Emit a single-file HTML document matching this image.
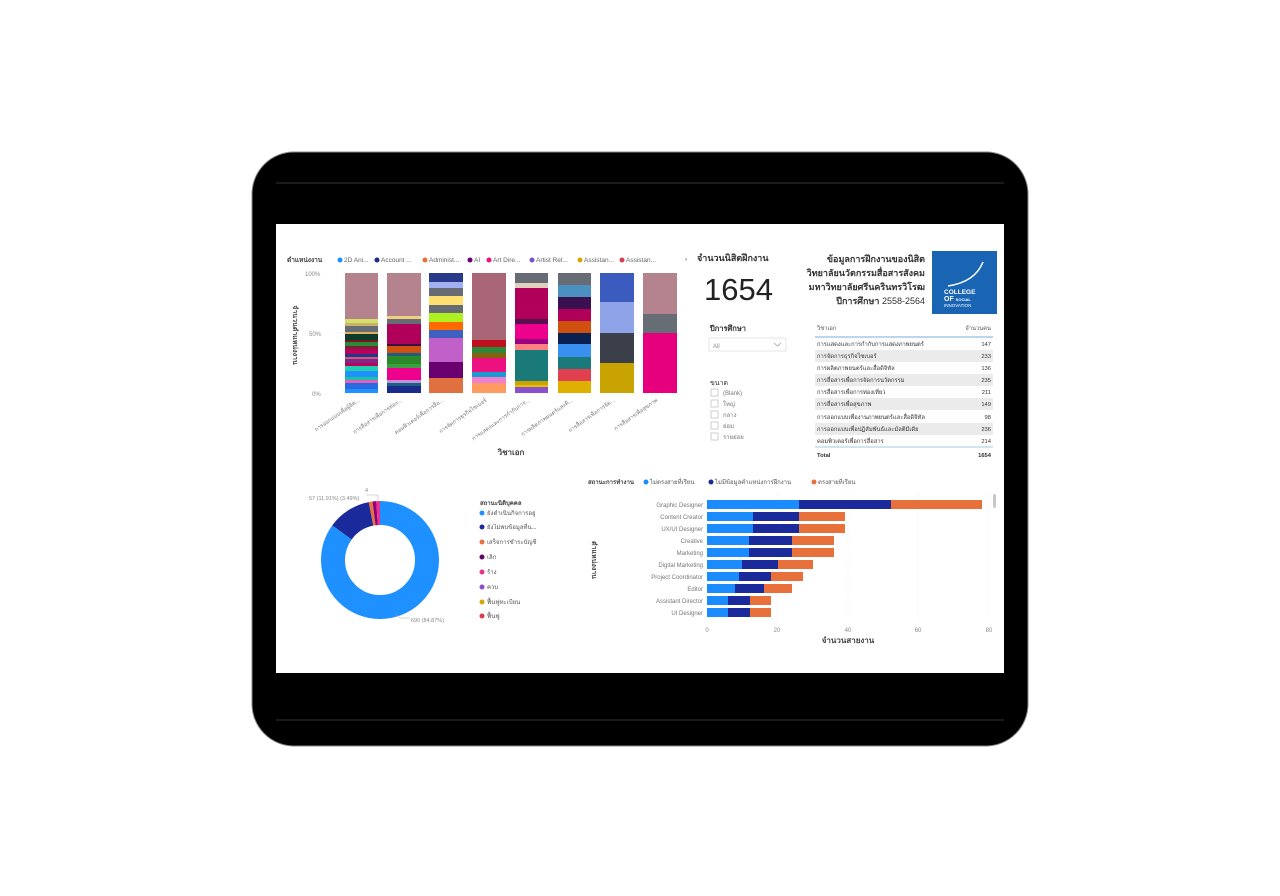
<!DOCTYPE html>
<html><head><meta charset="utf-8"><style>
html,body{margin:0;padding:0;background:#fff;width:1280px;height:896px;overflow:hidden}
svg text{font-family:"Liberation Sans","Noto Sans CJK SC",sans-serif}
</style></head><body>
<svg width="1280" height="896" viewBox="0 0 1280 896" xmlns="http://www.w3.org/2000/svg">
<rect width="1280" height="896" fill="#fff"/>
<rect x="252" y="152" width="776" height="594" rx="42" fill="#000" stroke="#888" stroke-width="1"/>
<line x1="276" y1="183" x2="1004" y2="183" stroke="#333"/>
<line x1="276" y1="720" x2="1004" y2="720" stroke="#333"/>
<rect x="276" y="224" width="728" height="449" fill="#fff"/>

<!-- legend top -->
<g font-size="6.5" fill="#666">
<text x="287" y="262" font-weight="bold" fill="#444">ตำแหน่งงาน</text>
<circle cx="340" cy="260" r="2.5" fill="#1e90ff"/><text x="344" y="262">2D Ani...</text>
<circle cx="377" cy="260" r="2.5" fill="#1a2a8a"/><text x="381" y="262">Account ...</text>
<circle cx="425" cy="260" r="2.5" fill="#e8703a"/><text x="429" y="262">Administ...</text>
<circle cx="470" cy="260" r="2.5" fill="#6a0070"/><text x="474" y="262">AI</text>
<circle cx="489" cy="260" r="2.5" fill="#ec1080"/><text x="493" y="262">Art Dire...</text>
<circle cx="532" cy="260" r="2.5" fill="#7a50d0"/><text x="536" y="262">Artist Rel...</text>
<circle cx="580" cy="260" r="2.5" fill="#d4a800"/><text x="584" y="262">Assistan...</text>
<circle cx="622" cy="260" r="2.5" fill="#d84050"/><text x="626" y="262">Assistan...</text>
</g>
<g font-size="6" fill="#888">
<text x="305" y="276">100%</text><text x="309" y="336">50%</text><text x="312" y="396">0%</text>
</g>
<line x1="330" y1="333" x2="680" y2="333" stroke="#eee" stroke-dasharray="1,2"/>
<text transform="translate(293,335) rotate(90)" font-size="7" fill="#444" text-anchor="middle" font-weight="bold">จำนวนตำแหน่งงาน</text>

<!-- bar1 -->
<g transform="translate(345,0)">
<rect y="273" width="33" height="46" fill="#b5838e"/><rect y="319" width="33" height="4" fill="#d4e06a"/><rect y="323" width="33" height="3" fill="#c9b36b"/><rect y="326" width="33" height="6" fill="#676b73"/><rect y="332" width="33" height="2" fill="#e0b060"/><rect y="334" width="33" height="6" fill="#0d3d2a"/><rect y="340" width="33" height="2" fill="#7a1420"/><rect y="342" width="33" height="4" fill="#2a8a3a"/><rect y="346" width="33" height="3" fill="#7a2030"/><rect y="349" width="33" height="5" fill="#b8005f"/><rect y="354" width="33" height="3" fill="#1b3a8a"/><rect y="357" width="33" height="2" fill="#e05070"/><rect y="359" width="33" height="4" fill="#7a2a8a"/><rect y="363" width="33" height="3" fill="#c0005a"/><rect y="366" width="33" height="5" fill="#20d0b0"/><rect y="371" width="33" height="6" fill="#1e90ff"/><rect y="377" width="33" height="3" fill="#20c0a0"/><rect y="380" width="33" height="3" fill="#e060c0"/><rect y="383" width="33" height="6" fill="#2a6adf"/><rect y="389" width="33" height="4" fill="#1e90ff"/>
</g>
<g transform="translate(387,0)">
<rect y="273" width="34" height="43" fill="#b5838e"/><rect y="316" width="34" height="3" fill="#f0d080"/><rect y="319" width="34" height="5" fill="#676b73"/><rect y="324" width="34" height="20" fill="#b0005a"/><rect y="344" width="34" height="2" fill="#3a1040"/><rect y="346" width="34" height="7" fill="#d05010"/><rect y="353" width="34" height="3" fill="#1b6080"/><rect y="356" width="34" height="8" fill="#2a8a2a"/><rect y="364" width="34" height="4" fill="#3aa040"/><rect y="368" width="34" height="12" fill="#ec008c"/><rect y="380" width="34" height="3" fill="#c090e0"/><rect y="383" width="34" height="3" fill="#1b6080"/><rect y="386" width="34" height="7" fill="#1a2a8a"/>
</g>
<g transform="translate(429,0)">
<rect y="273" width="34" height="9" fill="#2a3a8a"/><rect y="282" width="34" height="6" fill="#a0b0f0"/><rect y="288" width="34" height="8" fill="#676b73"/><rect y="296" width="34" height="9" fill="#ffe070"/><rect y="305" width="34" height="8" fill="#676b73"/><rect y="313" width="34" height="9" fill="#b0f020"/><rect y="322" width="34" height="8" fill="#ff6a00"/><rect y="330" width="34" height="8" fill="#4060c0"/><rect y="338" width="34" height="24" fill="#c060c8"/><rect y="362" width="34" height="16" fill="#6a0070"/><rect y="378" width="34" height="15" fill="#e07040"/>
</g>
<g transform="translate(472,0)">
<rect y="273" width="34" height="67" fill="#a86677"/><rect y="340" width="34" height="7" fill="#c01020"/><rect y="347" width="34" height="6" fill="#2a8a3a"/><rect y="353" width="34" height="5" fill="#8a6010"/><rect y="358" width="34" height="14" fill="#ec1080"/><rect y="372" width="34" height="5" fill="#1a9ad0"/><rect y="377" width="34" height="6" fill="#f080d0"/><rect y="383" width="34" height="10" fill="#ff9a60"/>
</g>
<g transform="translate(515,0)">
<rect y="273" width="33" height="10" fill="#676b73"/><rect y="283" width="33" height="5" fill="#e0d0c0"/><rect y="288" width="33" height="31" fill="#b0005a"/><rect y="319" width="33" height="5" fill="#5a1050"/><rect y="324" width="33" height="15" fill="#ec008c"/><rect y="339" width="33" height="5" fill="#9a0080"/><rect y="344" width="33" height="6" fill="#ff8080"/><rect y="350" width="33" height="31" fill="#1a7a7a"/><rect y="381" width="33" height="4" fill="#c9a400"/><rect y="385" width="33" height="2" fill="#e8c000"/><rect y="387" width="33" height="6" fill="#8a50d0"/>
</g>
<g transform="translate(558,0)">
<rect y="273" width="33" height="12" fill="#676b73"/><rect y="285" width="33" height="12" fill="#4a90c0"/><rect y="297" width="33" height="12" fill="#3a1050"/><rect y="309" width="33" height="12" fill="#b0005a"/><rect y="321" width="33" height="12" fill="#d05010"/><rect y="333" width="33" height="11" fill="#0a2050"/><rect y="344" width="33" height="13" fill="#3a90f0"/><rect y="357" width="33" height="12" fill="#1a7a7a"/><rect y="369" width="33" height="12" fill="#e04050"/><rect y="381" width="33" height="12" fill="#e0b000"/>
</g>
<g transform="translate(600,0)">
<rect y="273" width="34" height="29" fill="#3b5bbf"/><rect y="302" width="34" height="31" fill="#8fa3e8"/><rect y="333" width="34" height="30" fill="#3a3f4a"/><rect y="363" width="34" height="30" fill="#c9a400"/>
</g>
<g transform="translate(643,0)">
<rect y="273" width="34" height="41" fill="#b5838e"/><rect y="314" width="34" height="19" fill="#666d75"/><rect y="333" width="34" height="60" fill="#e6007e"/>
</g>
<g font-size="5.5" fill="#777">
<text transform="translate(360,401) rotate(-35)" text-anchor="end">การออกแบบเพื่อผู้ลิต...</text>
<text transform="translate(402,401) rotate(-35)" text-anchor="end">การสื่อสารเพื่อการท่อง...</text>
<text transform="translate(444,401) rotate(-35)" text-anchor="end">คอมพิวเตอร์เพื่อการสื่อ...</text>
<text transform="translate(487,401) rotate(-35)" text-anchor="end">การจัดการธุรกิจไซเบอร์</text>
<text transform="translate(530,401) rotate(-35)" text-anchor="end">การแสดงและการกำกับการ...</text>
<text transform="translate(573,401) rotate(-35)" text-anchor="end">การผลิตภาพยนตร์และดิ...</text>
<text transform="translate(615,401) rotate(-35)" text-anchor="end">การสื่อสารเพื่อการจัด...</text>
<text transform="translate(658,401) rotate(-35)" text-anchor="end">การสื่อสารเพื่อสุขภาพ</text>
</g>
<text x="511" y="455" font-size="8" fill="#444" text-anchor="middle" font-weight="bold">วิชาเอก</text>

<!-- KPI -->
<text x="685" y="261" font-size="6" fill="#444">›</text>
<text x="697" y="261" font-size="9" fill="#333" font-weight="bold">จำนวนนิสิตฝึกงาน</text>
<text x="704" y="300" font-size="31" fill="#222" font-family="DejaVu Sans">1654</text>

<!-- title -->
<g font-size="9" fill="#333" font-weight="bold" text-anchor="end">
<text x="925" y="262">ข้อมูลการฝึกงานของนิสิต</text>
<text x="925" y="276">วิทยาลัยนวัตกรรมสื่อสารสังคม</text>
<text x="925" y="290">มหาวิทยาลัยศรีนครินทรวิโรฒ</text>
<text x="925" y="304">ปีการศึกษา <tspan font-weight="normal">2558-2564</tspan></text>
</g>
<rect x="932" y="251" width="65" height="63" fill="#1a64b4"/>
<path d="M948 286 Q975 282 983 262" stroke="#fff" stroke-width="1.5" fill="none"/>
<text x="944" y="294" font-size="6.5" fill="#fff" font-weight="bold">COLLEGE</text>
<text x="944" y="301" font-size="7" fill="#fff" font-weight="bold">OF <tspan font-size="4">SOCIAL</tspan></text>
<text x="944" y="307" font-size="4.5" fill="#fff">INNOVATION</text>

<!-- slicers -->
<text x="710" y="331" font-size="7.5" fill="#333" font-weight="bold">ปีการศึกษา</text>
<rect x="709" y="338" width="77" height="13" fill="#fff" stroke="#e5e5e5"/>
<text x="713" y="348" font-size="6" fill="#888">All</text>
<path d="M774 343 l3.5 3 l3.5 -3" stroke="#999" fill="none" stroke-width="0.8"/>
<text x="710" y="385" font-size="7" fill="#333">ขนาด</text>
<g font-size="6" fill="#777">
<rect x="711" y="389" width="7" height="7" fill="#fff" stroke="#bbb" stroke-width="0.7"/><text x="723" y="395">(Blank)</text>
<rect x="711" y="400" width="7" height="7" fill="#fff" stroke="#bbb" stroke-width="0.7"/><text x="723" y="406">ใหญ่</text>
<rect x="711" y="411" width="7" height="7" fill="#fff" stroke="#bbb" stroke-width="0.7"/><text x="723" y="417">กลาง</text>
<rect x="711" y="422" width="7" height="7" fill="#fff" stroke="#bbb" stroke-width="0.7"/><text x="723" y="428">ย่อม</text>
<rect x="711" y="433" width="7" height="7" fill="#fff" stroke="#bbb" stroke-width="0.7"/><text x="723" y="439">รายย่อย</text>
</g>

<!-- table -->
<g font-size="5.8" fill="#333">
<text x="817" y="330" fill="#555">วิชาเอก</text><text x="991" y="330" text-anchor="end" fill="#555">จำนวนคน</text>
<line x1="815" y1="337" x2="993" y2="337" stroke="#4a90d0" stroke-width="0.8"/>
<rect x="815" y="350" width="178" height="12" fill="#ebebeb"/>
<rect x="815" y="374" width="178" height="12" fill="#ebebeb"/>
<rect x="815" y="398" width="178" height="12" fill="#ebebeb"/>
<rect x="815" y="423" width="178" height="12" fill="#ebebeb"/>
<text x="817" y="346">การแสดงและการกำกับการแสดงภาพยนตร์</text><text x="991" y="346" text-anchor="end">147</text>
<text x="817" y="358">การจัดการธุรกิจไซเบอร์</text><text x="991" y="358" text-anchor="end">233</text>
<text x="817" y="370">การผลิตภาพยนตร์และสื่อดิจิทัล</text><text x="991" y="370" text-anchor="end">136</text>
<text x="817" y="382">การสื่อสารเพื่อการจัดการนวัตกรรม</text><text x="991" y="382" text-anchor="end">235</text>
<text x="817" y="394">การสื่อสารเพื่อการท่องเที่ยว</text><text x="991" y="394" text-anchor="end">211</text>
<text x="817" y="406">การสื่อสารเพื่อสุขภาพ</text><text x="991" y="406" text-anchor="end">149</text>
<text x="817" y="419">การออกแบบเพื่องานภาพยนตร์และสื่อดิจิทัล</text><text x="991" y="419" text-anchor="end">98</text>
<text x="817" y="431">การออกแบบเพื่อปฏิสัมพันธ์และมัลติมีเดีย</text><text x="991" y="431" text-anchor="end">236</text>
<text x="817" y="443">คอมพิวเตอร์เพื่อการสื่อสาร</text><text x="991" y="443" text-anchor="end">214</text>
<line x1="815" y1="447" x2="993" y2="447" stroke="#4a90d0" stroke-width="0.6"/>
<text x="817" y="457" font-weight="bold">Total</text><text x="991" y="457" text-anchor="end" font-weight="bold">1654</text>
</g>

<!-- donut -->
<g transform="translate(380,560) rotate(-90)">
<circle r="47" fill="none" stroke="#1e90ff" stroke-width="24" stroke-dasharray="250.6 295.3"/>
<circle r="47" fill="none" stroke="#1a2a9a" stroke-width="24" stroke-dasharray="0 250.6 35.2 295.3"/>
<circle r="47" fill="none" stroke="#e8703a" stroke-width="24" stroke-dasharray="0 285.8 3 295.3"/>
<circle r="47" fill="none" stroke="#8a0080" stroke-width="24" stroke-dasharray="0 288.8 3 295.3"/>
<circle r="47" fill="none" stroke="#ec3090" stroke-width="24" stroke-dasharray="0 291.8 3.5 295.3"/>
</g>
<g font-size="5.5" fill="#888">
<text x="309" y="500">57 (11.91%) (3.49%)</text>
<text x="365" y="492">4</text>
<path d="M366 495 h12 v5" stroke="#aaa" fill="none" stroke-width="0.5"/>
<text x="411" y="622">690 (84.87%)</text>
<path d="M396 614 l4 4 h10" stroke="#aaa" fill="none" stroke-width="0.5"/>
</g>
<g font-size="6" fill="#555">
<text x="480" y="505" font-weight="bold" fill="#444">สถานะนิติบุคคล</text>
<circle cx="482" cy="513" r="2.5" fill="#1e90ff"/><text x="487" y="515">ยังดำเนินกิจการอยู่</text>
<circle cx="482" cy="527" r="2.5" fill="#1a2a9a"/><text x="487" y="529">ยังไม่พบข้อมูลที่น...</text>
<circle cx="482" cy="542" r="2.5" fill="#e8703a"/><text x="487" y="544">เสร็จการชำระบัญชี</text>
<circle cx="482" cy="557" r="2.5" fill="#6a0070"/><text x="487" y="559">เลิก</text>
<circle cx="482" cy="572" r="2.5" fill="#ec3090"/><text x="487" y="574">ร้าง</text>
<circle cx="482" cy="587" r="2.5" fill="#8a50d0"/><text x="487" y="589">ควบ</text>
<circle cx="482" cy="602" r="2.5" fill="#d4a800"/><text x="487" y="604">ฟื้นฟูทะเบียน</text>
<circle cx="482" cy="616" r="2.5" fill="#d84050"/><text x="487" y="618">ฟื้นฟู</text>
</g>

<!-- bar chart 2 -->
<g font-size="6" fill="#555">
<text x="588" y="484" font-weight="bold" fill="#444">สถานะการทำงาน</text>
<circle cx="646" cy="482" r="2.5" fill="#1a8cff"/><text x="650" y="484">ไม่ตรงสายที่เรียน</text>
<circle cx="711" cy="482" r="2.5" fill="#1a2a9a"/><text x="715" y="484">ไม่มีข้อมูลตำแหน่งการฝึกงาน</text>
<circle cx="814" cy="482" r="2.5" fill="#e8703a"/><text x="818" y="484">ตรงสายที่เรียน</text>
</g>
<text transform="translate(592,560) rotate(90)" font-size="7" fill="#444" text-anchor="middle" font-weight="bold">ตำแหน่งงาน</text>
<g stroke="#eee" stroke-dasharray="1,2"><line x1="777" y1="495" x2="777" y2="620"/><line x1="848" y1="495" x2="848" y2="620"/><line x1="918" y1="495" x2="918" y2="620"/><line x1="989" y1="495" x2="989" y2="620"/></g>
<g font-size="6" fill="#777" text-anchor="end">
<text x="703" y="507">Graphic Designer</text><text x="703" y="519">Content Creator</text><text x="703" y="531">UX/UI Designer</text><text x="703" y="543">Creative</text><text x="703" y="555">Marketing</text><text x="703" y="567">Digital Marketing</text><text x="703" y="579">Project Coordinator</text><text x="703" y="591">Editor</text><text x="703" y="603">Assistant Director</text><text x="703" y="615">UI Designer</text>
</g>
<g>
<rect x="707" y="500" width="92" height="9" fill="#1a8cff"/><rect x="799" y="500" width="92" height="9" fill="#1a2a9a"/><rect x="891" y="500" width="91" height="9" fill="#e8703a"/>
<rect x="707" y="512" width="46" height="9" fill="#1a8cff"/><rect x="753" y="512" width="46" height="9" fill="#1a2a9a"/><rect x="799" y="512" width="46" height="9" fill="#e8703a"/>
<rect x="707" y="524" width="46" height="9" fill="#1a8cff"/><rect x="753" y="524" width="46" height="9" fill="#1a2a9a"/><rect x="799" y="524" width="46" height="9" fill="#e8703a"/>
<rect x="707" y="536" width="42" height="9" fill="#1a8cff"/><rect x="749" y="536" width="43" height="9" fill="#1a2a9a"/><rect x="792" y="536" width="42" height="9" fill="#e8703a"/>
<rect x="707" y="548" width="42" height="9" fill="#1a8cff"/><rect x="749" y="548" width="43" height="9" fill="#1a2a9a"/><rect x="792" y="548" width="42" height="9" fill="#e8703a"/>
<rect x="707" y="560" width="35" height="9" fill="#1a8cff"/><rect x="742" y="560" width="36" height="9" fill="#1a2a9a"/><rect x="778" y="560" width="35" height="9" fill="#e8703a"/>
<rect x="707" y="572" width="32" height="9" fill="#1a8cff"/><rect x="739" y="572" width="32" height="9" fill="#1a2a9a"/><rect x="771" y="572" width="32" height="9" fill="#e8703a"/>
<rect x="707" y="584" width="28" height="9" fill="#1a8cff"/><rect x="735" y="584" width="29" height="9" fill="#1a2a9a"/><rect x="764" y="584" width="28" height="9" fill="#e8703a"/>
<rect x="707" y="596" width="21" height="9" fill="#1a8cff"/><rect x="728" y="596" width="22" height="9" fill="#1a2a9a"/><rect x="750" y="596" width="21" height="9" fill="#e8703a"/>
<rect x="707" y="608" width="21" height="9" fill="#1a8cff"/><rect x="728" y="608" width="22" height="9" fill="#1a2a9a"/><rect x="750" y="608" width="21" height="9" fill="#e8703a"/>
</g>
<rect x="993" y="494" width="3" height="14" rx="1.5" fill="#c8c8c8"/>
<g font-size="6" fill="#888" text-anchor="middle">
<text x="707" y="632">0</text><text x="777" y="632">20</text><text x="848" y="632">40</text><text x="918" y="632">60</text><text x="989" y="632">80</text>
</g>
<text x="848" y="643" font-size="8" fill="#444" text-anchor="middle" font-weight="bold">จำนวนสายงาน</text>
</svg>
</body></html>
